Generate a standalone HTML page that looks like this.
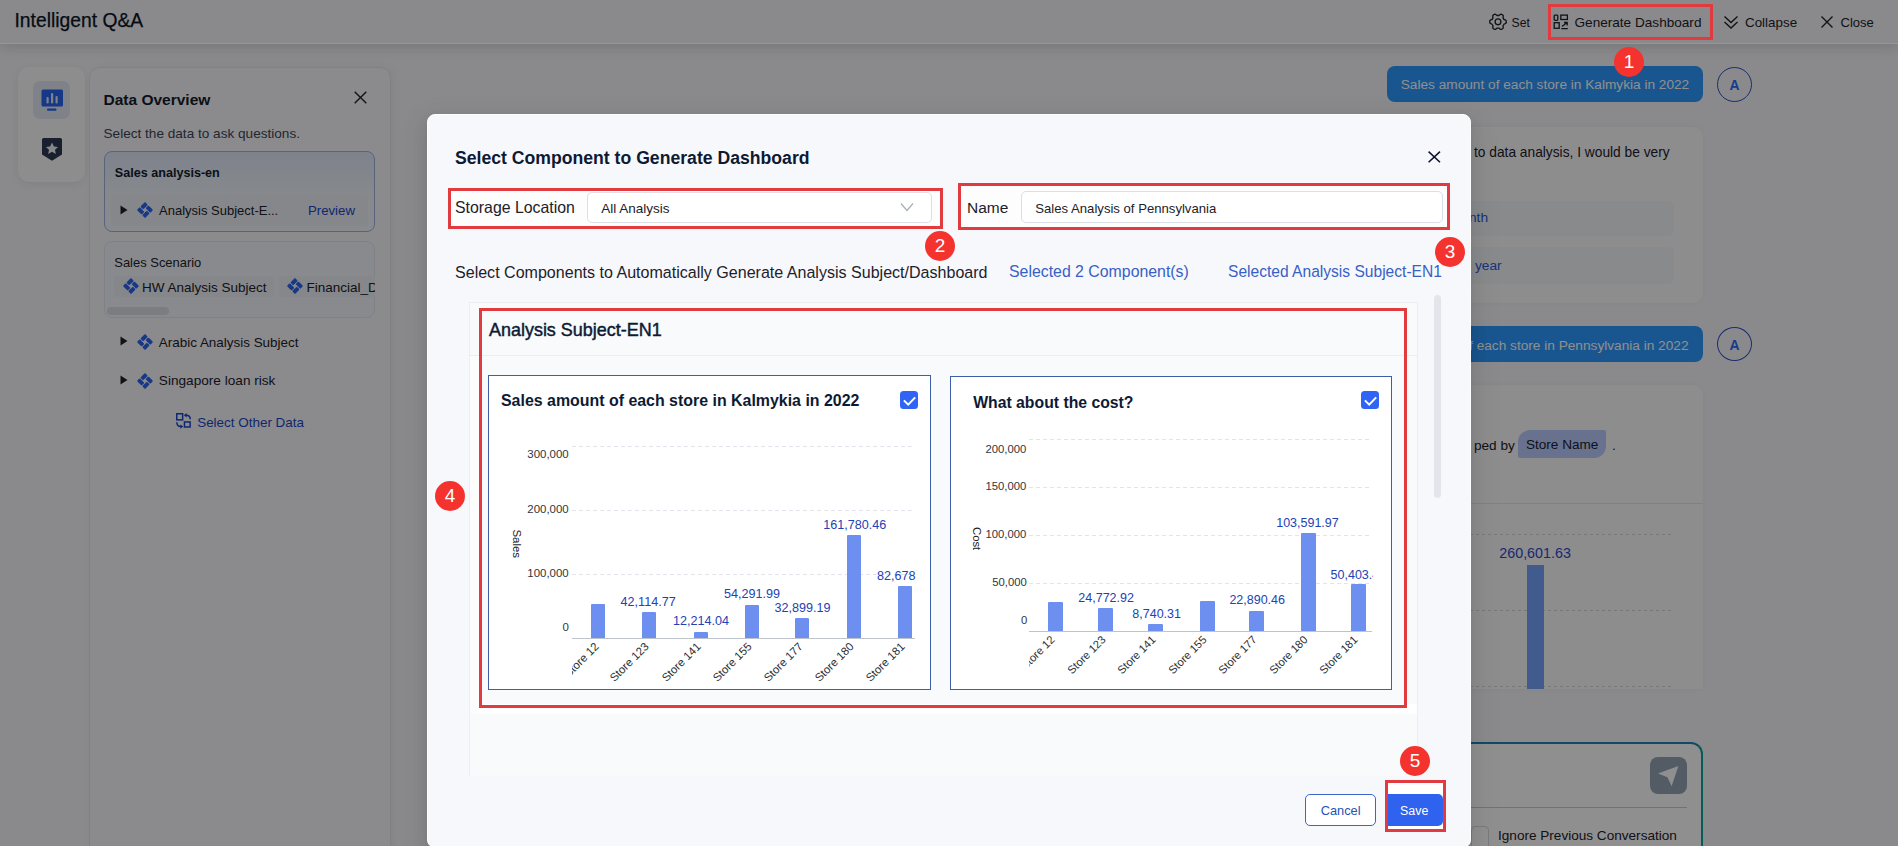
<!DOCTYPE html>
<html><head><meta charset="utf-8">
<style>
html,body{margin:0;padding:0;}
body{width:1898px;height:846px;overflow:hidden;position:relative;font-family:"Liberation Sans", sans-serif;background:#eef1f7;}
.t{position:absolute;line-height:1;white-space:nowrap;}
.r{position:absolute;}
svg.r{overflow:visible;}
</style></head><body>
<div id="page">
<div class="r" style="left:0px;top:44px;width:1898px;height:802px;background:#f6f6f9;"></div>
<div class="r" style="left:0px;top:0px;width:1898px;height:44px;background:#f6f7f9;border-bottom:1px solid #ffffff;box-sizing:border-box;box-shadow:0 4px 14px rgba(0,10,30,0.13);"></div>
<div class="t" style="left:14.50px;top:10.86px;font-size:19.3px;color:#0b1426;-webkit-text-stroke:0.25px #0b1426;">Intelligent Q&amp;A</div>
<svg class="r" style="left:1488px;top:12px" width="20" height="20" viewBox="0 0 20 20"><path d="M10.00 3.45 L10.28 3.46 L10.55 3.47 L10.83 3.50 L11.14 3.31 L11.50 3.03 L11.89 2.75 L12.31 2.49 L12.74 2.27 L13.16 2.18 L13.49 2.32 L13.81 2.48 L14.12 2.66 L14.43 2.84 L14.73 3.04 L15.02 3.25 L15.15 3.66 L15.18 4.15 L15.16 4.64 L15.11 5.12 L15.05 5.57 L15.04 5.93 L15.20 6.16 L15.36 6.39 L15.50 6.63 L15.63 6.87 L15.76 7.12 L15.87 7.37 L16.19 7.55 L16.61 7.72 L17.05 7.91 L17.49 8.14 L17.89 8.41 L18.18 8.72 L18.22 9.08 L18.24 9.44 L18.25 9.80 L18.24 10.16 L18.22 10.52 L18.18 10.88 L17.89 11.19 L17.49 11.46 L17.05 11.69 L16.61 11.88 L16.19 12.05 L15.87 12.23 L15.76 12.48 L15.63 12.73 L15.50 12.97 L15.36 13.21 L15.20 13.44 L15.04 13.67 L15.05 14.03 L15.11 14.48 L15.16 14.96 L15.18 15.45 L15.15 15.94 L15.02 16.35 L14.73 16.56 L14.43 16.76 L14.13 16.94 L13.81 17.12 L13.49 17.28 L13.16 17.42 L12.74 17.33 L12.31 17.11 L11.89 16.85 L11.50 16.57 L11.14 16.29 L10.83 16.10 L10.55 16.13 L10.28 16.14 L10.00 16.15 L9.72 16.14 L9.45 16.13 L9.17 16.10 L8.86 16.29 L8.50 16.57 L8.11 16.85 L7.69 17.11 L7.26 17.33 L6.84 17.42 L6.51 17.28 L6.19 17.12 L5.87 16.94 L5.57 16.76 L5.27 16.56 L4.98 16.35 L4.85 15.94 L4.82 15.45 L4.84 14.96 L4.89 14.48 L4.95 14.03 L4.96 13.67 L4.80 13.44 L4.64 13.21 L4.50 12.98 L4.37 12.73 L4.24 12.48 L4.13 12.23 L3.81 12.05 L3.39 11.88 L2.95 11.69 L2.51 11.46 L2.11 11.19 L1.82 10.88 L1.78 10.52 L1.76 10.16 L1.75 9.80 L1.76 9.44 L1.78 9.08 L1.82 8.72 L2.11 8.41 L2.51 8.14 L2.95 7.91 L3.39 7.72 L3.81 7.55 L4.13 7.37 L4.24 7.12 L4.37 6.87 L4.50 6.63 L4.64 6.39 L4.80 6.16 L4.96 5.93 L4.95 5.57 L4.89 5.12 L4.84 4.64 L4.82 4.15 L4.85 3.66 L4.98 3.25 L5.27 3.04 L5.57 2.84 L5.88 2.66 L6.19 2.48 L6.51 2.32 L6.84 2.18 L7.26 2.27 L7.69 2.49 L8.11 2.75 L8.50 3.03 L8.86 3.31 L9.17 3.50 L9.45 3.47 L9.72 3.46 L10.00 3.45Z" fill="none" stroke="#1d2129" stroke-width="1.35" stroke-linejoin="round"/><circle cx="10" cy="9.8" r="2.9" fill="none" stroke="#1d2129" stroke-width="1.35"/></svg>
<div class="t" style="left:1511.50px;top:16.97px;font-size:12.2px;color:#1d2129;">Set</div>
<svg class="r" style="left:1553px;top:14px" width="16" height="16" viewBox="0 0 16 16"><rect x="1.2" y="1.1" width="3.6" height="5.2" rx="0.8" fill="none" stroke="#1d2129" stroke-width="1.3"/><rect x="7.8" y="1.1" width="6.6" height="4.4" fill="none" stroke="#1d2129" stroke-width="1.3"/><rect x="1.2" y="8.7" width="5" height="5.6" fill="none" stroke="#1d2129" stroke-width="1.3"/><path d="M9 12.6 L14 8.6 M11 8.5 H14.2 V11.5 M8.3 14.6 H14.8" fill="none" stroke="#1d2129" stroke-width="1.3"/></svg>
<div class="t" style="left:1574.50px;top:15.79px;font-size:13.6px;color:#1d2129;">Generate Dashboard</div>
<svg class="r" style="left:1723px;top:15px" width="16" height="15" viewBox="0 0 16 15"><path d="M1.5 1.5 L8 7.5 L14.5 1.5 M1.5 7 L8 13 L14.5 7" fill="none" stroke="#1d2129" stroke-width="1.4"/></svg>
<div class="t" style="left:1745.00px;top:15.96px;font-size:13.4px;color:#1d2129;">Collapse</div>
<svg class="r" style="left:1820px;top:16px" width="14" height="12" viewBox="0 0 14 12"><path d="M1.5 0.5 L12.5 11.5 M12.5 0.5 L1.5 11.5" fill="none" stroke="#1d2129" stroke-width="1.4"/></svg>
<div class="t" style="left:1840.50px;top:16.30px;font-size:13.0px;color:#1d2129;">Close</div>
<div class="r" style="left:18px;top:67px;width:67px;height:115px;background:#fbfbfe;border-radius:11px;box-shadow:0 2px 8px rgba(30,40,80,0.08);"></div>
<div class="r" style="left:33px;top:81px;width:37px;height:38px;background:#e3e8f2;border-radius:7px;"></div>
<svg class="r" style="left:41px;top:89px" width="23" height="23" viewBox="0 0 23 23"><rect x="0.5" y="0.5" width="21.5" height="17" rx="1.5" fill="#2a62f0"/><rect x="6" y="19.5" width="9.5" height="2.2" rx="1" fill="#2a62f0"/><rect x="5.5" y="8" width="2.2" height="6.5" rx="1" fill="#e3e8f2"/><rect x="10" y="4" width="2.2" height="10.5" rx="1" fill="#e3e8f2"/><rect x="14.5" y="7" width="2.2" height="7.5" rx="1" fill="#e3e8f2"/></svg>
<svg class="r" style="left:42px;top:138px" width="20" height="23" viewBox="0 0 20 23"><path d="M0 1.5 Q0 0 1.5 0 H18.5 Q20 0 20 1.5 V16.5 L10 22.8 L0 16.5 Z" fill="#2c3a52"/><path d="M10 4.5 L11.9 8.4 L16.1 8.9 L13 11.7 L13.8 15.9 L10 13.8 L6.2 15.9 L7 11.7 L3.9 8.9 L8.1 8.4 Z" fill="#f0f2f6"/></svg>
<div class="r" style="left:89px;top:67px;width:302px;height:833px;background:#f8f8fc;border-radius:11px;border:1px solid #e4e7ec;box-sizing:border-box;box-shadow:2px 0 8px rgba(0,10,30,0.05);"></div>
<div class="t" style="left:103.50px;top:91.88px;font-size:15.5px;color:#141c2c;font-weight:700;">Data Overview</div>
<svg class="r" style="left:354px;top:91px" width="13" height="13" viewBox="0 0 13 13"><path d="M0.7 0.7 L12.3 12.3 M12.3 0.7 L0.7 12.3" fill="none" stroke="#1d2129" stroke-width="1.4"/></svg>
<div class="t" style="left:103.50px;top:127.49px;font-size:13.6px;color:#3d4555;">Select the data to ask questions.</div>
<div class="r" style="left:104px;top:151px;width:271px;height:81px;background:linear-gradient(180deg,#e1e8f8 0%,#f2f5fc 60%,#f5f7fc 100%);border:1px solid #9fb3dc;border-radius:8px;box-sizing:border-box;"></div>
<div class="t" style="left:114.80px;top:167.33px;font-size:12.6px;color:#141c2c;font-weight:700;">Sales analysis-en</div>
<div class="r" style="left:111px;top:194px;width:257px;height:32px;background:#eef1f8;border-radius:4px;"></div>
<svg class="r" style="left:120px;top:204.5px" width="8" height="10" viewBox="0 0 8 10"><path d="M0.5 0.5 L7.5 5 L0.5 9.5Z" fill="#1d2129"/></svg>
<svg class="r" style="left:137px;top:202px" width="16" height="16" viewBox="0 0 16 16"><g transform="rotate(45 8 8)" fill="#2a62f0"><rect x="2.30" y="2.30" width="4.00" height="6.60" rx="0.9"/><rect x="2.30" y="9.70" width="6.60" height="4.00" rx="0.9"/><rect x="7.10" y="2.30" width="6.60" height="4.00" rx="0.9"/><rect x="9.70" y="7.10" width="4.00" height="6.60" rx="0.9"/></g></svg>
<div class="t" style="left:159.00px;top:204.00px;font-size:13.0px;color:#1d2129;">Analysis Subject-E...</div>
<div class="t" style="left:308.00px;top:203.83px;font-size:13.2px;color:#1a47c6;">Preview</div>
<div class="r" style="left:104px;top:241px;width:271px;height:77px;background:#f5f7fb;border:1px solid #e3e7ef;border-radius:8px;box-sizing:border-box;"></div>
<div class="t" style="left:114.30px;top:257.24px;font-size:12.95px;color:#1d2129;">Sales Scenario</div>
<div class="r" style="left:114px;top:276px;width:160px;height:21px;background:#edf0f6;border-radius:4px;"></div>
<svg class="r" style="left:123px;top:278px" width="16" height="16" viewBox="0 0 16 16"><g transform="rotate(45 8 8)" fill="#2a62f0"><rect x="2.30" y="2.30" width="4.00" height="6.60" rx="0.9"/><rect x="2.30" y="9.70" width="6.60" height="4.00" rx="0.9"/><rect x="7.10" y="2.30" width="6.60" height="4.00" rx="0.9"/><rect x="9.70" y="7.10" width="4.00" height="6.60" rx="0.9"/></g></svg>
<div class="t" style="left:142.00px;top:280.57px;font-size:13.5px;color:#1d2129;">HW Analysis Subject</div>
<div class="r" style="left:104px;top:241px;width:271px;height:77px;overflow:hidden;"><div class="r" style="left:175px;top:35px;width:121px;height:21px;background:#edf0f6;border-radius:4px;"></div>
<svg class="r" style="left:183px;top:37px" width="16" height="16" viewBox="0 0 16 16"><g transform="rotate(45 8 8)" fill="#2a62f0"><rect x="2.30" y="2.30" width="4.00" height="6.60" rx="0.9"/><rect x="2.30" y="9.70" width="6.60" height="4.00" rx="0.9"/><rect x="7.10" y="2.30" width="6.60" height="4.00" rx="0.9"/><rect x="9.70" y="7.10" width="4.00" height="6.60" rx="0.9"/></g></svg>
<div class="t" style="left:202.50px;top:39.57px;font-size:13.5px;color:#1d2129;">Financial_D</div>
</div><div class="r" style="left:107px;top:307px;width:62px;height:8px;background:#dcdfe6;border-radius:4px;"></div>
<svg class="r" style="left:120px;top:336px" width="8" height="10" viewBox="0 0 8 10"><path d="M0.5 0.5 L7.5 5 L0.5 9.5Z" fill="#1d2129"/></svg>
<svg class="r" style="left:137px;top:334px" width="16" height="16" viewBox="0 0 16 16"><g transform="rotate(45 8 8)" fill="#2a62f0"><rect x="2.30" y="2.30" width="4.00" height="6.60" rx="0.9"/><rect x="2.30" y="9.70" width="6.60" height="4.00" rx="0.9"/><rect x="7.10" y="2.30" width="6.60" height="4.00" rx="0.9"/><rect x="9.70" y="7.10" width="4.00" height="6.60" rx="0.9"/></g></svg>
<div class="t" style="left:158.80px;top:336.11px;font-size:13.45px;color:#1d2129;">Arabic Analysis Subject</div>
<svg class="r" style="left:120px;top:375px" width="8" height="10" viewBox="0 0 8 10"><path d="M0.5 0.5 L7.5 5 L0.5 9.5Z" fill="#1d2129"/></svg>
<svg class="r" style="left:137px;top:373px" width="16" height="16" viewBox="0 0 16 16"><g transform="rotate(45 8 8)" fill="#2a62f0"><rect x="2.30" y="2.30" width="4.00" height="6.60" rx="0.9"/><rect x="2.30" y="9.70" width="6.60" height="4.00" rx="0.9"/><rect x="7.10" y="2.30" width="6.60" height="4.00" rx="0.9"/><rect x="9.70" y="7.10" width="4.00" height="6.60" rx="0.9"/></g></svg>
<div class="t" style="left:158.80px;top:374.45px;font-size:13.64px;color:#1d2129;">Singapore loan risk</div>
<svg class="r" style="left:175px;top:412px" width="17" height="17" viewBox="0 0 17 17"><rect x="1.75" y="1.75" width="5.9" height="6.1" fill="none" stroke="#1a47c6" stroke-width="1.5"/><rect x="9.45" y="9.95" width="5.7" height="5" fill="none" stroke="#1a47c6" stroke-width="1.5"/><path d="M10.8 3.2 Q15.2 3 15.3 7.3" fill="none" stroke="#1a47c6" stroke-width="1.5"/><path d="M8.8 3.2 L11.6 1 L11.6 5.4Z" fill="#1a47c6"/><path d="M1.8 10.3 Q1.8 14.6 6 14.6" fill="none" stroke="#1a47c6" stroke-width="1.5"/><path d="M8.2 14.6 L5.4 12.4 L5.4 16.8Z" fill="#1a47c6"/></svg>
<div class="t" style="left:197.20px;top:415.92px;font-size:13.44px;color:#1a47c6;">Select Other Data</div>
<div class="r" style="left:1387px;top:66px;width:316px;height:36px;background:#2e98ff;border-radius:8px;"></div>
<div class="t" style="right:208.79999999999995px;top:78.43px;font-size:13.67px;color:#ffffff;">Sales amount of each store in Kalmykia in 2022</div>
<div class="r" style="left:1717px;top:67px;width:35px;height:35px;border:1.3px solid #2d4fc8;border-radius:50%;box-sizing:border-box;"></div>
<div class="t" style="left:1729.60px;top:79.03px;font-size:13.9px;color:#2a6cff;font-weight:700;">A</div>
<div class="r" style="left:1400px;top:127px;width:303px;height:176px;background:#fbfbfe;border-radius:10px;box-shadow:0 0 6px rgba(0,10,30,0.04);"></div>
<div class="t" style="left:1474.00px;top:146.36px;font-size:13.75px;color:#1d2129;">to data analysis, I would be very</div>
<div class="r" style="left:1400px;top:201px;width:274px;height:35px;background:#f4f6fa;border-radius:6px;"></div>
<div class="t" style="left:1469.00px;top:211.40px;font-size:13.7px;color:#2a5cd8;">nth</div>
<div class="r" style="left:1400px;top:247px;width:274px;height:37px;background:#f4f6fa;border-radius:6px;"></div>
<div class="t" style="left:1475.00px;top:259.40px;font-size:13.7px;color:#2a5cd8;">year</div>
<div class="r" style="left:1387px;top:326px;width:316px;height:36px;background:#2e98ff;border-radius:8px;"></div>
<div class="t" style="right:209.5px;top:339.03px;font-size:13.67px;color:#ffffff;">Sales amount of each store in Pennsylvania in 2022</div>
<div class="r" style="left:1717px;top:327px;width:35px;height:34px;border:1.3px solid #2d4fc8;border-radius:50%;box-sizing:border-box;"></div>
<div class="t" style="left:1729.60px;top:339.03px;font-size:13.9px;color:#2a6cff;font-weight:700;">A</div>
<div class="r" style="left:1400px;top:385px;width:303px;height:304px;background:#fbfbfe;border-radius:10px 10px 0 0;box-shadow:0 0 6px rgba(0,10,30,0.04);"></div>
<div class="t" style="left:1474.00px;top:439.49px;font-size:13.6px;color:#1d2129;">ped by</div>
<div class="r" style="left:1518px;top:430px;width:88px;height:28px;background:#b9cbff;border-radius:12px 2px 12px 2px;"></div>
<div class="t" style="left:1526.00px;top:438.01px;font-size:13.57px;color:#1d2129;">Store Name</div>
<div class="t" style="left:1612.00px;top:439.49px;font-size:13.6px;color:#1d2129;">.</div>
<div class="r" style="left:1400px;top:503px;width:303px;height:1px;background:#e4e6ea;"></div>
<div class="r" style="left:1470px;top:534px;width:203px;height:1px;background-image:linear-gradient(90deg,#d3d6dc 55%,transparent 55%);background-size:6px 1px;"></div>
<div class="r" style="left:1470px;top:610px;width:203px;height:1px;background-image:linear-gradient(90deg,#d3d6dc 55%,transparent 55%);background-size:6px 1px;"></div>
<div class="r" style="left:1470px;top:686px;width:203px;height:1px;background-image:linear-gradient(90deg,#d3d6dc 55%,transparent 55%);background-size:6px 1px;"></div>
<div class="t" style="left:1499.30px;top:545.90px;font-size:14.3px;color:#3048c8;">260,601.63</div>
<div class="r" style="left:1527px;top:565px;width:17px;height:124px;background:#76a2ff;"></div>
<div class="r" style="left:1400px;top:742px;width:303px;height:158px;background:#ffffff;border:2px solid #0aa6a0;border-radius:12px;box-sizing:border-box;border-top-color:#1c86b8;"></div>
<div class="r" style="left:1650px;top:757px;width:37px;height:37px;background:#95a3b5;border-radius:8px;"></div>
<svg class="r" style="left:1650px;top:757px" width="37" height="37" viewBox="0 0 37 37"><path d="M8 16.6 L28.4 9 L21.6 29.2 L17.5 20.3 Z" fill="#ffffff"/></svg>
<div class="r" style="left:1400px;top:807px;width:287px;height:1px;background:#c8cbd0;"></div>
<div class="r" style="left:1471px;top:826px;width:18px;height:30px;border:1px solid #d6d9de;border-radius:4px;box-sizing:border-box;background:#fff;"></div>
<div class="t" style="left:1498.00px;top:828.50px;font-size:13.59px;color:#1d2129;">Ignore Previous Conversation</div>
</div>
<div class="r" style="left:0px;top:0px;width:1898px;height:846px;background:rgba(0,0,0,0.44);"></div>
<div class="r" style="left:0px;top:43px;width:1898px;height:1px;background:rgba(255,255,255,0.07);"></div>
<div class="r" style="left:1548px;top:4px;width:165px;height:36px;border:3px solid #e23b3f;box-sizing:border-box;"></div>
<div class="r" style="left:427px;top:114px;width:1044px;height:734px;background:#f7f8fc;border-radius:8px;border:1px solid #ffffff;box-sizing:border-box;box-shadow:0 6px 16px rgba(0,0,0,0.08),0 3px 6px -4px rgba(0,0,0,0.12),0 9px 28px 8px rgba(0,0,0,0.05);"></div>
<div class="t" style="left:455.00px;top:149.97px;font-size:17.64px;color:#0e1a33;font-weight:700;">Select Component to Generate Dashboard</div>
<svg class="r" style="left:1427px;top:150px" width="15" height="14" viewBox="0 0 15 14"><path d="M1.6 1.6 L13 12.2 M13 1.6 L1.6 12.2" fill="none" stroke="#0c1230" stroke-width="1.55"/></svg>
<div class="r" style="left:448px;top:188px;width:495px;height:41px;border:3px solid #e23b3f;box-sizing:border-box;background:#fdfdfd;"></div>
<div class="t" style="left:455.00px;top:199.77px;font-size:15.87px;color:#1d2129;">Storage Location</div>
<div class="r" style="left:587px;top:192px;width:345px;height:31px;background:#ffffff;border:1px solid #dcdfe6;border-radius:5px;box-sizing:border-box;"></div>
<div class="t" style="left:601.20px;top:201.77px;font-size:13.5px;color:#1d2129;">All Analysis</div>
<svg class="r" style="left:900px;top:202px" width="14" height="10" viewBox="0 0 14 10"><path d="M1 1.5 L7 8.5 L13 1.5" fill="none" stroke="#a8adb7" stroke-width="1.2"/></svg>
<div class="r" style="left:958px;top:183px;width:492px;height:47px;border:3px solid #e23b3f;box-sizing:border-box;background:#fdfdfd;"></div>
<div class="t" style="left:967.00px;top:200.10px;font-size:15.48px;color:#1d2129;">Name</div>
<div class="r" style="left:1021px;top:191px;width:422px;height:32px;background:#ffffff;border:1px solid #dcdfe6;border-radius:5px;box-sizing:border-box;"></div>
<div class="t" style="left:1035.30px;top:201.88px;font-size:13.14px;color:#1d2129;">Sales Analysis of Pennsylvania</div>
<div class="t" style="left:455.00px;top:263.61px;font-size:16.06px;color:#1d2129;">Select Components to Automatically Generate Analysis Subject/Dashboard</div>
<div class="t" style="left:1009.00px;top:263.77px;font-size:15.87px;color:#3760c6;">Selected 2 Component(s)</div>
<div class="t" style="left:1228.00px;top:264.00px;font-size:15.59px;color:#3760c6;">Selected Analysis Subject-EN1</div>
<div class="r" style="left:469px;top:302px;width:949px;height:474px;background:#f9fafc;border:1px solid #eceef3;border-bottom:none;box-sizing:border-box;"></div>
<div class="r" style="left:1434px;top:295px;width:7px;height:203px;background:#e3e5ea;border-radius:4px;"></div>
<div class="r" style="left:470px;top:355px;width:947px;height:1px;background:#eceef3;"></div>
<div class="t" style="left:489.00px;top:321.59px;font-size:17.97px;color:#0e1a33;-webkit-text-stroke:0.45px #0e1a33;">Analysis Subject-EN1</div>
<div class="r" style="left:470px;top:704px;width:947px;height:10px;background:#ffffff;"></div>
<div class="r" style="left:470px;top:356px;width:9px;height:358px;background:#fcfcfd;"></div>
<div class="r" style="left:488px;top:375px;width:443px;height:315px;background:#ffffff;border:1px solid #3f5ea8;box-sizing:border-box;"></div>
<div class="t" style="left:501.00px;top:392.52px;font-size:15.93px;color:#0e1a33;font-weight:700;">Sales amount of each store in Kalmykia in 2022</div>
<svg class="r" style="left:900px;top:391px" width="18" height="18" viewBox="0 0 18 18"><rect x="0" y="0" width="18" height="18" rx="3.5" fill="#2f64f4"/><path d="M3.9 9.4 L8.2 13.6 L15.2 6.4" fill="none" stroke="#ffffff" stroke-width="2"/></svg>
<div class="r" style="left:950px;top:376px;width:442px;height:314px;background:#ffffff;border:1px solid #3f5ea8;box-sizing:border-box;"></div>
<div class="t" style="left:973.20px;top:394.64px;font-size:15.78px;color:#0e1a33;font-weight:700;">What about the cost?</div>
<svg class="r" style="left:1361px;top:391px" width="18" height="18" viewBox="0 0 18 18"><rect x="0" y="0" width="18" height="18" rx="3.5" fill="#2f64f4"/><path d="M3.9 9.4 L8.2 13.6 L15.2 6.4" fill="none" stroke="#ffffff" stroke-width="2"/></svg>
<div class="r" style="left:572px;top:446px;width:343px;height:1px;background-image:linear-gradient(90deg,#e1e4ea 55%,transparent 55%);background-size:7px 1px;"></div>
<div class="r" style="left:572px;top:510px;width:343px;height:1px;background-image:linear-gradient(90deg,#e1e4ea 55%,transparent 55%);background-size:7px 1px;"></div>
<div class="r" style="left:572px;top:574px;width:343px;height:1px;background-image:linear-gradient(90deg,#e1e4ea 55%,transparent 55%);background-size:7px 1px;"></div>
<div class="r" style="left:572px;top:638px;width:343px;height:1px;background:#bfc4cc;"></div>
<div class="t" style="left:527.30px;top:449.01px;font-size:11.45px;color:#30353d;">300,000</div>
<div class="t" style="left:527.30px;top:503.61px;font-size:11.45px;color:#30353d;">200,000</div>
<div class="t" style="left:527.30px;top:568.11px;font-size:11.45px;color:#30353d;">100,000</div>
<div class="t" style="left:562.50px;top:622.11px;font-size:11.45px;color:#30353d;">0</div>
<div class="t" style="left:0.00px;top:-9.69px;font-size:11.45px;color:#1d2129;left:501.5px;top:538px;transform:rotate(90deg);">Sales</div>
<div class="r" style="left:591px;top:604px;width:14px;height:34px;background:#6c8ff0;border-radius:1px 1px 0 0;"></div>
<div class="r" style="left:642px;top:612px;width:14px;height:26px;background:#6c8ff0;border-radius:1px 1px 0 0;"></div>
<div class="r" style="left:694px;top:632px;width:14px;height:6px;background:#6c8ff0;border-radius:1px 1px 0 0;"></div>
<div class="r" style="left:745px;top:605px;width:14px;height:33px;background:#6c8ff0;border-radius:1px 1px 0 0;"></div>
<div class="r" style="left:795px;top:618px;width:14px;height:20px;background:#6c8ff0;border-radius:1px 1px 0 0;"></div>
<div class="r" style="left:847px;top:535px;width:14px;height:103px;background:#6c8ff0;border-radius:1px 1px 0 0;"></div>
<div class="r" style="left:898px;top:586px;width:14px;height:52px;background:#6c8ff0;border-radius:1px 1px 0 0;"></div>
<div class="t" style="left:620.60px;top:595.63px;font-size:12.6px;color:#2242b4;">42,114.77</div>
<div class="t" style="left:673.00px;top:615.13px;font-size:12.6px;color:#2242b4;">12,214.04</div>
<div class="t" style="left:723.90px;top:588.03px;font-size:12.6px;color:#2242b4;">54,291.99</div>
<div class="t" style="left:774.50px;top:601.93px;font-size:12.6px;color:#2242b4;">32,899.19</div>
<div class="t" style="left:823.20px;top:519.23px;font-size:12.6px;color:#2242b4;">161,780.46</div>
<div class="t" style="left:877.00px;top:569.83px;font-size:12.6px;color:#2242b4;">82,678</div>
<div class="r" style="left:1029px;top:439px;width:343px;height:1px;background-image:linear-gradient(90deg,#e1e4ea 55%,transparent 55%);background-size:7px 1px;"></div>
<div class="r" style="left:1029px;top:487px;width:343px;height:1px;background-image:linear-gradient(90deg,#e1e4ea 55%,transparent 55%);background-size:7px 1px;"></div>
<div class="r" style="left:1029px;top:535px;width:343px;height:1px;background-image:linear-gradient(90deg,#e1e4ea 55%,transparent 55%);background-size:7px 1px;"></div>
<div class="r" style="left:1029px;top:583px;width:343px;height:1px;background-image:linear-gradient(90deg,#e1e4ea 55%,transparent 55%);background-size:7px 1px;"></div>
<div class="r" style="left:1029px;top:631px;width:343px;height:1px;background:#bfc4cc;"></div>
<div class="t" style="left:985.50px;top:444.03px;font-size:11.3px;color:#30353d;">200,000</div>
<div class="t" style="left:985.50px;top:481.03px;font-size:11.3px;color:#30353d;">150,000</div>
<div class="t" style="left:985.50px;top:529.13px;font-size:11.3px;color:#30353d;">100,000</div>
<div class="t" style="left:992.30px;top:577.23px;font-size:11.3px;color:#30353d;">50,000</div>
<div class="t" style="left:1020.90px;top:615.13px;font-size:11.3px;color:#30353d;">0</div>
<div class="t" style="left:0.00px;top:-9.57px;font-size:11.3px;color:#1d2129;left:965px;top:533px;transform:rotate(90deg);">Cost</div>
<div class="r" style="left:1048px;top:602px;width:15px;height:29px;background:#6c8ff0;border-radius:1px 1px 0 0;"></div>
<div class="r" style="left:1098px;top:608px;width:15px;height:23px;background:#6c8ff0;border-radius:1px 1px 0 0;"></div>
<div class="r" style="left:1148px;top:624px;width:15px;height:7px;background:#6c8ff0;border-radius:1px 1px 0 0;"></div>
<div class="r" style="left:1200px;top:601px;width:15px;height:30px;background:#6c8ff0;border-radius:1px 1px 0 0;"></div>
<div class="r" style="left:1249px;top:611px;width:15px;height:20px;background:#6c8ff0;border-radius:1px 1px 0 0;"></div>
<div class="r" style="left:1301px;top:533px;width:15px;height:98px;background:#6c8ff0;border-radius:1px 1px 0 0;"></div>
<div class="r" style="left:1351px;top:584px;width:15px;height:47px;background:#6c8ff0;border-radius:1px 1px 0 0;"></div>
<div class="r" style="left:1029px;top:500px;width:344px;height:131px;overflow:hidden;"><div class="t" style="left:49.30px;top:92.02px;font-size:12.5px;color:#2242b4;">24,772.92</div>
<div class="t" style="left:103.30px;top:107.72px;font-size:12.5px;color:#2242b4;">8,740.31</div>
<div class="t" style="left:200.40px;top:94.12px;font-size:12.5px;color:#2242b4;">22,890.46</div>
<div class="t" style="left:247.20px;top:16.62px;font-size:12.5px;color:#2242b4;">103,591.97</div>
<div class="t" style="left:301.60px;top:68.52px;font-size:12.5px;color:#2242b4;">50,403.4</div>
</div><div class="r" style="left:572px;top:639px;width:358px;height:49px;overflow:hidden"><div class="t" style="left:20.5px;top:1.5px;font-size:11.4px;color:#2b2f36;transform-origin:100% 0;transform:translateX(-100%) rotate(-45deg);">Store 12</div>
<div class="t" style="left:71.0px;top:1.5px;font-size:11.4px;color:#2b2f36;transform-origin:100% 0;transform:translateX(-100%) rotate(-45deg);">Store 123</div>
<div class="t" style="left:123.0px;top:1.5px;font-size:11.4px;color:#2b2f36;transform-origin:100% 0;transform:translateX(-100%) rotate(-45deg);">Store 141</div>
<div class="t" style="left:174.20000000000005px;top:1.5px;font-size:11.4px;color:#2b2f36;transform-origin:100% 0;transform:translateX(-100%) rotate(-45deg);">Store 155</div>
<div class="t" style="left:224.89999999999998px;top:1.5px;font-size:11.4px;color:#2b2f36;transform-origin:100% 0;transform:translateX(-100%) rotate(-45deg);">Store 177</div>
<div class="t" style="left:276.1px;top:1.5px;font-size:11.4px;color:#2b2f36;transform-origin:100% 0;transform:translateX(-100%) rotate(-45deg);">Store 180</div>
<div class="t" style="left:327.1px;top:1.5px;font-size:11.4px;color:#2b2f36;transform-origin:100% 0;transform:translateX(-100%) rotate(-45deg);">Store 181</div>
</div><div class="r" style="left:1029px;top:632px;width:361px;height:56px;overflow:hidden"><div class="t" style="left:20.200000000000045px;top:1.5px;font-size:11.2px;color:#2b2f36;transform-origin:100% 0;transform:translateX(-100%) rotate(-45deg);">Store 12</div>
<div class="t" style="left:70.79999999999995px;top:1.5px;font-size:11.2px;color:#2b2f36;transform-origin:100% 0;transform:translateX(-100%) rotate(-45deg);">Store 123</div>
<div class="t" style="left:121.0px;top:1.5px;font-size:11.2px;color:#2b2f36;transform-origin:100% 0;transform:translateX(-100%) rotate(-45deg);">Store 141</div>
<div class="t" style="left:172.0999999999999px;top:1.5px;font-size:11.2px;color:#2b2f36;transform-origin:100% 0;transform:translateX(-100%) rotate(-45deg);">Store 155</div>
<div class="t" style="left:221.9000000000001px;top:1.5px;font-size:11.2px;color:#2b2f36;transform-origin:100% 0;transform:translateX(-100%) rotate(-45deg);">Store 177</div>
<div class="t" style="left:273.4000000000001px;top:1.5px;font-size:11.2px;color:#2b2f36;transform-origin:100% 0;transform:translateX(-100%) rotate(-45deg);">Store 180</div>
<div class="t" style="left:323.0999999999999px;top:1.5px;font-size:11.2px;color:#2b2f36;transform-origin:100% 0;transform:translateX(-100%) rotate(-45deg);">Store 181</div>
</div><div class="r" style="left:479px;top:308px;width:928px;height:400px;border:3px solid #e23b3f;box-sizing:border-box;"></div>
<div class="r" style="left:1305px;top:794px;width:71px;height:32px;background:#ffffff;border:1px solid #3a66cc;border-radius:5px;box-sizing:border-box;"></div>
<div class="t" style="left:1320.70px;top:804.86px;font-size:12.8px;color:#2451b8;">Cancel</div>
<div class="r" style="left:1385px;top:780px;width:61px;height:52px;border:3px solid #e23b3f;box-sizing:border-box;background:#ffffff;"></div>
<div class="r" style="left:1388px;top:794px;width:55px;height:32px;background:#2f62ee;border-radius:0 5px 5px 0;"></div>
<div class="t" style="left:1400.00px;top:805.19px;font-size:12.42px;color:#ffffff;">Save</div>
<div class="r" style="left:1614px;top:47px;width:30px;height:30px;background:#f5332e;border-radius:50%;"></div>
<div class="t" style="left:1623.80px;top:51.52px;font-size:19px;color:#ffffff;">1</div>
<div class="r" style="left:925px;top:231px;width:30px;height:30px;background:#f5332e;border-radius:50%;"></div>
<div class="t" style="left:934.80px;top:235.52px;font-size:19px;color:#ffffff;">2</div>
<div class="r" style="left:1435px;top:237px;width:30px;height:30px;background:#f5332e;border-radius:50%;"></div>
<div class="t" style="left:1444.80px;top:241.52px;font-size:19px;color:#ffffff;">3</div>
<div class="r" style="left:435px;top:481px;width:30px;height:30px;background:#f5332e;border-radius:50%;"></div>
<div class="t" style="left:444.80px;top:485.52px;font-size:19px;color:#ffffff;">4</div>
<div class="r" style="left:1400px;top:746px;width:30px;height:30px;background:#f5332e;border-radius:50%;"></div>
<div class="t" style="left:1409.80px;top:750.52px;font-size:19px;color:#ffffff;">5</div>
</body></html>
